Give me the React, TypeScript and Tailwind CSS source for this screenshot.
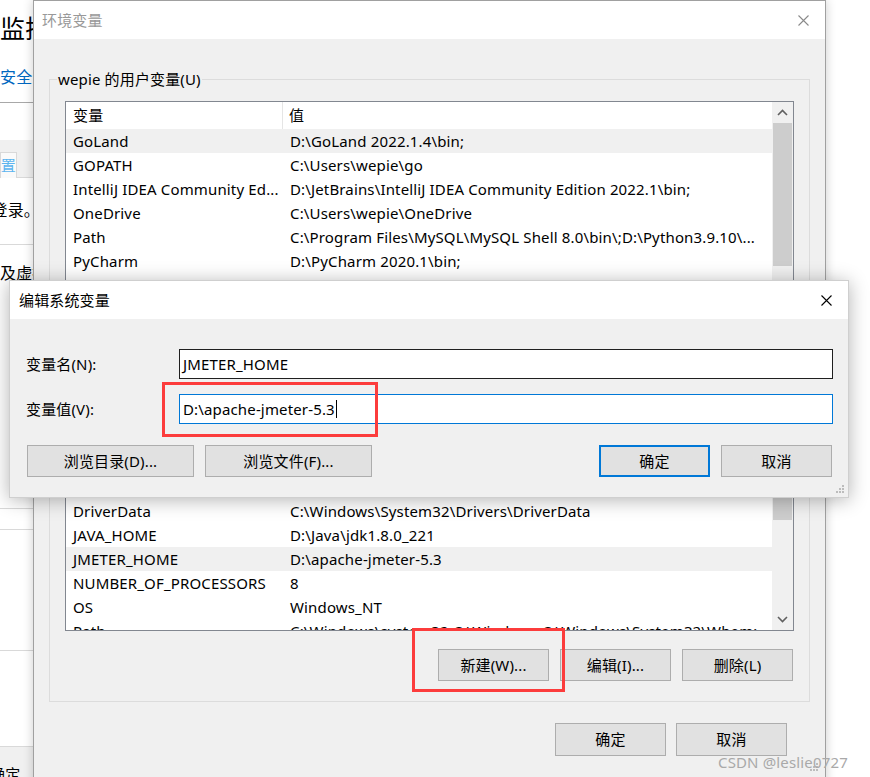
import React from 'react';

type Row = { name: string; value: string; hl?: boolean };

const userVars: Row[] = [
  { name: 'GoLand', value: 'D:\\GoLand 2022.1.4\\bin;', hl: true },
  { name: 'GOPATH', value: 'C:\\Users\\wepie\\go' },
  { name: 'IntelliJ IDEA Community Ed...', value: 'D:\\JetBrains\\IntelliJ IDEA Community Edition 2022.1\\bin;' },
  { name: 'OneDrive', value: 'C:\\Users\\wepie\\OneDrive' },
  { name: 'Path', value: 'C:\\Program Files\\MySQL\\MySQL Shell 8.0\\bin\\;D:\\Python3.9.10\\...' },
  { name: 'PyCharm', value: 'D:\\PyCharm 2020.1\\bin;' },
  { name: 'TEMP', value: 'C:\\Users\\wepie\\AppData\\Local\\Temp' },
  { name: 'TMP', value: 'C:\\Users\\wepie\\AppData\\Local\\Temp' },
];

const sysVars: Row[] = [
  { name: 'ComSpec', value: 'C:\\Windows\\system32\\cmd.exe' },
  { name: 'ComSpec', value: 'C:\\Windows\\system32\\cmd.exe' },
  { name: 'DriverData', value: 'C:\\Windows\\System32\\Drivers\\DriverData' },
  { name: 'JAVA_HOME', value: 'D:\\Java\\jdk1.8.0_221' },
  { name: 'JMETER_HOME', value: 'D:\\apache-jmeter-5.3', hl: true },
  { name: 'NUMBER_OF_PROCESSORS', value: '8' },
  { name: 'OS', value: 'Windows_NT' },
  { name: 'Path', value: 'C:\\Windows\\system32;C:\\Windows;C:\\Windows\\System32\\Wbem;' },
];

function CloseX({ color }: { color: string }) {
  return (
    <svg width="11" height="11" viewBox="0 0 11 11" className="shrink-0">
      <path d="M0.5 0.5 L10.5 10.5 M10.5 0.5 L0.5 10.5" stroke={color} strokeWidth="1.1" />
    </svg>
  );
}

function Chevron({ up }: { up?: boolean }) {
  return (
    <svg width="11" height="7" viewBox="0 0 11 7">
      <path d={up ? 'M1 6 L5.5 1.5 L10 6' : 'M1 1 L5.5 5.5 L10 1'} stroke="#606060" strokeWidth="1.6" fill="none" />
    </svg>
  );
}

function Grip() {
  return (
    <svg width="10" height="10" viewBox="0 0 10 10">
      <g fill="#bcbcbc">
        <rect x="7" y="1" width="2" height="2" />
        <rect x="4" y="4" width="2" height="2" />
        <rect x="7" y="4" width="2" height="2" />
        <rect x="1" y="7" width="2" height="2" />
        <rect x="4" y="7" width="2" height="2" />
        <rect x="7" y="7" width="2" height="2" />
      </g>
    </svg>
  );
}

function VarRow({ row }: { row: Row }) {
  return (
    <div className={`flex h-[24px] shrink-0 items-center whitespace-nowrap ${row.hl ? 'bg-[#f0f0f0]' : 'bg-white'}`}>
      <div className="w-[217px] shrink-0 overflow-hidden pl-[7px]">{row.name}</div>
      <div className="min-w-0 flex-1 overflow-hidden pl-[7px]">{row.value}</div>
    </div>
  );
}

function Btn({ children, className }: { children: React.ReactNode; className: string }) {
  return (
    <div className={`flex items-center justify-center bg-[#e1e1e1] text-[15px] ${className}`}>{children}</div>
  );
}

export default function App() {
  return (
    <div className="relative flex h-[777px] w-[870px] overflow-hidden bg-white font-['Noto_Sans','Noto_Sans_CJK_SC',sans-serif] text-[15px] tracking-[0.15px] text-black">
      {/* page behind the windows */}
      <div className="flex w-[33px] shrink-0 flex-col overflow-hidden whitespace-nowrap">
        <div className="h-[56px] pt-[12px] text-[25px] leading-[32px]">监控</div>
        <div className="h-[47px] border-b border-[#a8a8a8] pt-[11px] text-[16px] leading-[20px] text-[#0067c0]">安全</div>
        <div className="h-[37px]" />
        <div className="h-[38px] border-b border-[#d9d9d9] bg-[#f0f0f0] pt-[12px]">
          <div className="flex h-[26px] w-[17px] justify-end overflow-hidden border border-b-0 border-[#d9d9d9] bg-[#fafafa] leading-[24px] text-[#5bb4ef]">
            设置
          </div>
        </div>
        <div className="flex h-[67px] justify-end border-b border-[#d9d9d9] pt-[22px] text-[16px] leading-[20px]">
          <span className="mr-[-7px]">已登录。</span>
        </div>
        <div className="h-[264px] border-b border-[#d9d9d9] pt-[18px] text-[16px] leading-[20px]">及虚拟机</div>
        <div className="h-[21px] border-b border-[#d9d9d9]" />
        <div className="h-[121px] border-b border-[#d9d9d9]" />
        <div className="h-[96px] border-b border-[#d9d9d9]" />
        <div className="h-[30px] bg-[#f0f0f0] pt-[17px] leading-[20px]">
          <div className="ml-[-10px]">确定</div>
        </div>
      </div>

      {/* 环境变量 window */}
      <div className="absolute left-[33px] top-0 flex h-[800px] w-[793px] flex-col border border-[#a0a0a0] bg-[#f0f0f0] shadow-[0_0_10px_rgba(0,0,0,0.2)]">
        <div className="flex h-[38px] shrink-0 items-center justify-between bg-white pl-[8px]">
          <span className="text-[#999999]">环境变量</span>
          <div className="mr-[16px]">
            <CloseX color="#8a8a8a" />
          </div>
        </div>
        <div className="flex flex-col pt-[30px]">
          <fieldset className="mx-[15px] border border-[#dcdcdc]">
            <legend className="ml-[7px] px-[1px] leading-[20px]">wepie 的用户变量(U)</legend>
            <div className="flex flex-col px-[15px] pb-[20px]">
              {/* user variables */}
              <div className="mt-[12px] flex h-[190px] overflow-hidden border border-[#828790] bg-white">
                <div className="flex min-w-0 flex-1 flex-col">
                  <div className="flex h-[27px] shrink-0 items-center whitespace-nowrap">
                    <div className="w-[217px] shrink-0 border-r border-[#e5e5e5] pl-[7px] leading-[27px]">变量</div>
                    <div className="pl-[6px]">值</div>
                  </div>
                  {userVars.map((r, i) => (
                    <VarRow key={i} row={r} />
                  ))}
                </div>
                <div className="flex w-[21px] shrink-0 flex-col bg-[#f0f0f0]">
                  <div className="flex h-[21px] items-center justify-center">
                    <Chevron up />
                  </div>
                  <div className="mx-[1px] h-[143px] bg-[#cdcdcd]" />
                </div>
              </div>

              {/* system variables */}
              <div className="mt-[159px] flex h-[181px] overflow-hidden border border-[#828790] bg-white">
                <div className="flex min-w-0 flex-1 flex-col">
                  {sysVars.map((r, i) => (
                    <VarRow key={i} row={r} />
                  ))}
                </div>
                <div className="flex w-[21px] shrink-0 flex-col bg-[#f0f0f0]">
                  <div className="mx-[1px] h-[69px] bg-[#cdcdcd]" />
                  <div className="flex-1" />
                  <div className="flex h-[21px] items-center justify-center">
                    <Chevron />
                  </div>
                </div>
              </div>

              <div className="mt-[18px] flex justify-end gap-[11px] pr-[1px]">
                <Btn className="h-[32px] w-[111px] border border-[#adadad]">新建(W)...</Btn>
                <Btn className="h-[32px] w-[111px] border border-[#adadad]">编辑(I)...</Btn>
                <Btn className="h-[32px] w-[111px] border border-[#adadad]">删除(L)</Btn>
              </div>
            </div>
          </fieldset>
          <div className="mt-[21px] flex justify-end gap-[10px] pr-[38px]">
            <Btn className="h-[33px] w-[111px] border border-[#adadad]">确定</Btn>
            <Btn className="h-[33px] w-[111px] border border-[#adadad]">取消</Btn>
          </div>
        </div>
      </div>
      <div className="absolute left-[809px] top-[762px]">
        <Grip />
      </div>

      {/* 编辑系统变量 dialog */}
      <div className="absolute left-[9px] top-[280px] flex h-[218px] w-[840px] flex-col border border-[#cfcfcf] bg-[#f0f0f0] shadow-[0_2px_18px_rgba(0,0,0,0.3)]">
        <div className="flex h-[38px] shrink-0 items-center justify-between bg-white pl-[9px]">
          <span>编辑系统变量</span>
          <div className="mr-[16px]">
            <CloseX color="#000000" />
          </div>
        </div>
        <div className="flex flex-col pl-[16px] pr-[15px] pt-[30px]">
          <div className="flex items-center">
            <div className="w-[153px] shrink-0">变量名(N):</div>
            <div className="flex h-[30px] flex-1 items-center border border-[#1f1f1f] bg-white pl-[3px]">JMETER_HOME</div>
          </div>
          <div className="mt-[15px] flex items-center">
            <div className="w-[153px] shrink-0">变量值(V):</div>
            <div className="flex h-[30px] flex-1 items-center border border-[#0078d7] bg-white pl-[3px]">
              <span>D:\apache-jmeter-5.3</span>
              <span className="ml-[1px] h-[18px] w-[1px] bg-black" />
            </div>
          </div>
        </div>
        <div className="mt-[21px] flex items-center pl-[17px] pr-[16px]">
          <Btn className="h-[32px] w-[167px] border border-[#adadad]">浏览目录(D)...</Btn>
          <Btn className="ml-[11px] h-[32px] w-[167px] border border-[#adadad]">浏览文件(F)...</Btn>
          <div className="flex-1" />
          <Btn className="h-[32px] w-[111px] border-2 border-[#0078d7]">确定</Btn>
          <Btn className="ml-[11px] h-[32px] w-[111px] border border-[#adadad]">取消</Btn>
        </div>
        <div className="absolute bottom-[3px] right-[3px]">
          <Grip />
        </div>
      </div>

      {/* red highlight boxes */}
      <div className="absolute left-[162px] top-[382px] h-[55px] w-[216px] border-[3px] border-[#fc3c3c]" />
      <div className="absolute left-[412px] top-[628px] h-[64px] w-[153px] border-[3px] border-[#fc3c3c]" />

      {/* watermark */}
      <div className="absolute left-[718px] top-[751px] whitespace-nowrap text-[15px] leading-[22px] text-[#a9a9a9]">
        CSDN @leslie0727
      </div>
    </div>
  );
}
